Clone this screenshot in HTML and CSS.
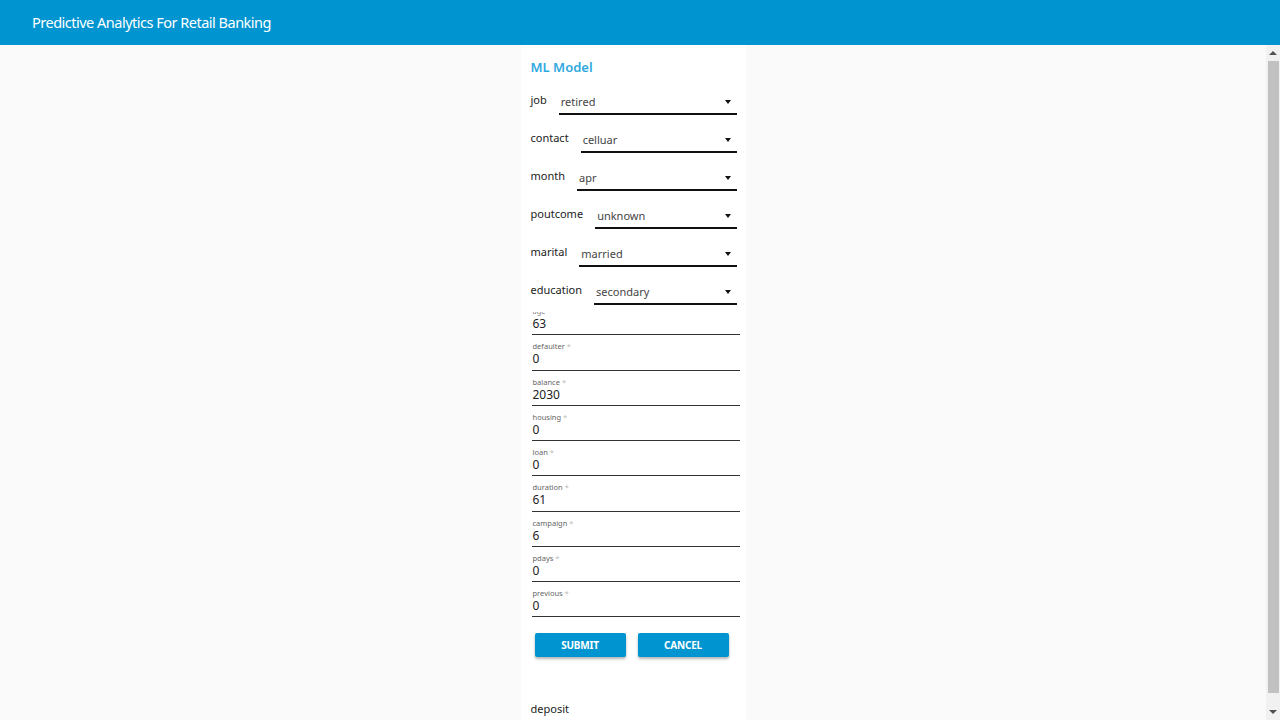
FILE: index.html
```html
<!DOCTYPE html>
<html>
<head>
<meta charset="utf-8">
<title>Predictive Analytics For Retail Banking</title>
<link rel="stylesheet" href="styles.css">
</head>
<body>
<div class="app">
  <header class="topbar">Predictive Analytics For Retail Banking</header>
  <div class="viewport">
    <main class="main">
      <section class="card">
        <h2 class="card-title">ML Model</h2>
        <div class="selects">
          <div class="select-row"><span class="select-label">job</span><div class="select"><span class="select-value">retired</span><span class="caret"></span></div></div>
          <div class="select-row"><span class="select-label">contact</span><div class="select"><span class="select-value">celluar</span><span class="caret"></span></div></div>
          <div class="select-row"><span class="select-label">month</span><div class="select"><span class="select-value">apr</span><span class="caret"></span></div></div>
          <div class="select-row"><span class="select-label">poutcome</span><div class="select"><span class="select-value">unknown</span><span class="caret"></span></div></div>
          <div class="select-row"><span class="select-label">marital</span><div class="select"><span class="select-value">married</span><span class="caret"></span></div></div>
          <div class="select-row"><span class="select-label">education</span><div class="select"><span class="select-value">secondary</span><span class="caret"></span></div></div>
        </div>
        <div class="fields">
          <div class="field"><div class="field-label clipped">age *</div><div class="field-value">63</div></div>
          <div class="field"><div class="field-label">defaulter <span class="req">*</span></div><div class="field-value">0</div></div>
          <div class="field"><div class="field-label">balance <span class="req">*</span></div><div class="field-value">2030</div></div>
          <div class="field"><div class="field-label">housing <span class="req">*</span></div><div class="field-value">0</div></div>
          <div class="field"><div class="field-label">loan <span class="req">*</span></div><div class="field-value">0</div></div>
          <div class="field"><div class="field-label">duration <span class="req">*</span></div><div class="field-value">61</div></div>
          <div class="field"><div class="field-label">campaign <span class="req">*</span></div><div class="field-value">6</div></div>
          <div class="field"><div class="field-label">pdays <span class="req">*</span></div><div class="field-value">0</div></div>
          <div class="field"><div class="field-label">previous <span class="req">*</span></div><div class="field-value">0</div></div>
        </div>
        <div class="actions">
          <button class="btn">SUBMIT</button>
          <button class="btn">CANCEL</button>
        </div>
        <div class="result">deposit</div>
      </section>
    </main>
    <div class="scrollbar">
      <div class="sb-btn"><span class="sb-up"></span></div>
      <div class="sb-track"><div class="sb-thumb"></div></div>
      <div class="sb-btn"><span class="sb-down"></span></div>
    </div>
  </div>
</div>
</body>
</html>
```
FILE: styles.css
```css
* { box-sizing: border-box; }
html, body { margin: 0; padding: 0; }
body {
  font-family: "Noto Sans", "Open Sans", "DejaVu Sans", sans-serif;
  background: #fafafa;
  color: #222;
}
.app {
  width: 1280px;
  height: 720px;
  display: flex;
  flex-direction: column;
  overflow: hidden;
}
.topbar {
  height: 45px;
  flex: none;
  background: #0095d0;
  color: #fff;
  font-size: 14.5px;
  letter-spacing: -0.5px;
  line-height: 45px;
  padding-left: 32px;
}
.viewport {
  flex: 1;
  display: flex;
  min-height: 0;
}
.main {
  flex: 1;
  display: flex;
  justify-content: center;
  overflow: hidden;
}
.card {
  width: 225px;
  height: 800px;
  background: #fff;
  padding: 13px 5px 0 10px;
}
.card-title {
  margin: 0 0 5px 0;
  font-size: 13px;
  line-height: 18px;
  font-weight: 600;
  color: #2fa9e0;
}
.selects { padding-right: 4px; }
.select-row {
  height: 38px;
  display: flex;
  align-items: flex-start;
}
.select-label {
  margin-top: 12px;
  font-size: 11px;
  line-height: 14px;
  color: #222;
  margin-right: 12px;
}
.select {
  flex: 1;
  margin-top: 14px;
  display: flex;
  align-items: center;
  justify-content: space-between;
  padding: 0 6px 4px 2px;
  border-bottom: 2px solid #111;
}
.select-value {
  font-size: 11px;
  line-height: 14px;
  color: #444;
}
.caret {
  width: 0;
  height: 0;
  border-left: 3.5px solid transparent;
  border-right: 3.5px solid transparent;
  border-top: 4px solid #111;
}
.fields {
  margin-top: -9px;
  padding-left: 1px;
  padding-right: 1px;
}
.field {
  padding: 6px 0 2.25px 1px;
  border-bottom: 1px solid #333;
}
.field-label {
  font-size: 7.5px;
  line-height: 10px;
  color: #666;
}
.field-label.clipped {
  clip-path: inset(6px 0 0 0);
  color: #888;
}
.req { color: #bbb; }
.field-value {
  font-size: 12px;
  line-height: 16px;
  color: #222;
}
.actions {
  display: flex;
  gap: 12px;
  margin: 16px 0 0 4px;
}
.btn {
  width: 91px;
  height: 24px;
  border: none;
  border-radius: 2px;
  background: #0095d0;
  color: #fff;
  font-family: "Noto Sans", "Open Sans", sans-serif;
  font-size: 10px;
  font-weight: 700;
  letter-spacing: -0.2px;
  box-shadow: 0 2px 3px rgba(0,0,0,0.3);
  padding: 0;
}
.result {
  margin-top: 45px;
  font-size: 11px;
  line-height: 14px;
  color: #222;
}
.scrollbar {
  width: 14px;
  flex: none;
  background: #f1f1f1;
  display: flex;
  flex-direction: column;
}
.sb-btn {
  height: 16px;
  flex: none;
  display: flex;
  align-items: center;
  justify-content: center;
}
.sb-up {
  width: 0; height: 0;
  border-left: 4px solid transparent;
  border-right: 4px solid transparent;
  border-bottom: 4px solid #505050;
}
.sb-down {
  width: 0; height: 0;
  border-left: 4px solid transparent;
  border-right: 4px solid transparent;
  border-top: 4px solid #505050;
}
.sb-track {
  flex: 1;
  padding: 0 1px 0 2px;
}
.sb-thumb {
  height: 632px;
  background: #c1c1c1;
}
```
